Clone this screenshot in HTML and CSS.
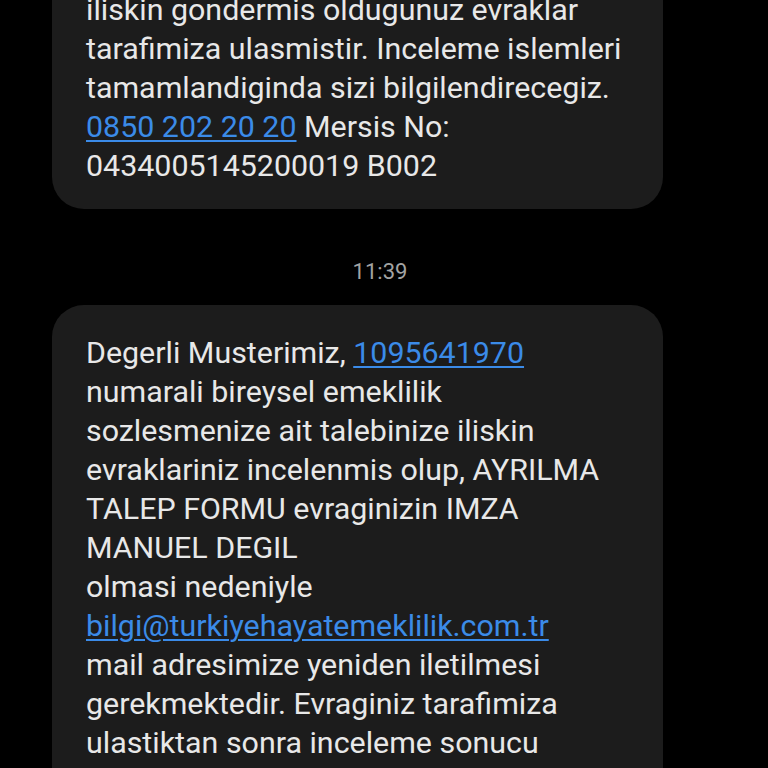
FILE: index.html
```html
<!DOCTYPE html>
<html>
<head>
<meta charset="utf-8">
<link rel="stylesheet" href="styles.css">
</head>
<body>
<div class="thread">
  <div class="bubble first">
    <span class="line">iliskin gondermis oldugunuz evraklar</span>
    <span class="line">tarafimiza ulasmistir. Inceleme islemleri</span>
    <span class="line">tamamlandiginda sizi bilgilendirecegiz.</span>
    <span class="line"><a class="link" href="#">0850 202 20 20</a> Mersis No:</span>
    <span class="line">0434005145200019 B002</span>
  </div>
  <div class="time">11:39</div>
  <div class="bubble last">
    <span class="line">Degerli Musterimiz, <a class="link" href="#">1095641970</a></span>
    <span class="line">numarali bireysel emeklilik</span>
    <span class="line">sozlesmenize ait talebinize iliskin</span>
    <span class="line">evraklariniz incelenmis olup, AYRILMA</span>
    <span class="line">TALEP FORMU evraginizin IMZA</span>
    <span class="line">MANUEL DEGIL</span>
    <span class="line">olmasi nedeniyle</span>
    <span class="line"><a class="link" href="#">bilgi@turkiyehayatemeklilik.com.tr</a></span>
    <span class="line">mail adresimize yeniden iletilmesi</span>
    <span class="line">gerekmektedir. Evraginiz tarafimiza</span>
    <span class="line">ulastiktan sonra inceleme sonucu</span>
  </div>
</div>
</body>
</html>
```
FILE: styles.css
```css
html, body {
  margin: 0;
  padding: 0;
  background: #000;
  overflow: hidden;
}
.thread {
  display: flex;
  flex-direction: column;
}
.bubble {
  margin: 0 105px 0 52px;
  background: #1c1c1c;
  border-radius: 32px;
  padding: 28px 34px 24px;
  display: flex;
  flex-direction: column;
  font-family: Roboto, "Noto Sans", sans-serif;
  font-size: 30.4px;
  line-height: 39px;
  color: #e8e8e8;
}
.bubble.first {
  margin-top: -38px;
}
.bubble.last {
  padding-bottom: 80px;
}
.line {
  white-space: nowrap;
}
.link {
  color: #3b8be8;
  text-decoration: underline;
  text-decoration-thickness: 2px;
  text-underline-offset: 3px;
}
.time {
  margin: 51px 0 21px;
  padding-right: 8px;
  text-align: center;
  font-family: Roboto, "Noto Sans", sans-serif;
  font-size: 22px;
  line-height: 24px;
  color: #a3a3a3;
}
```
